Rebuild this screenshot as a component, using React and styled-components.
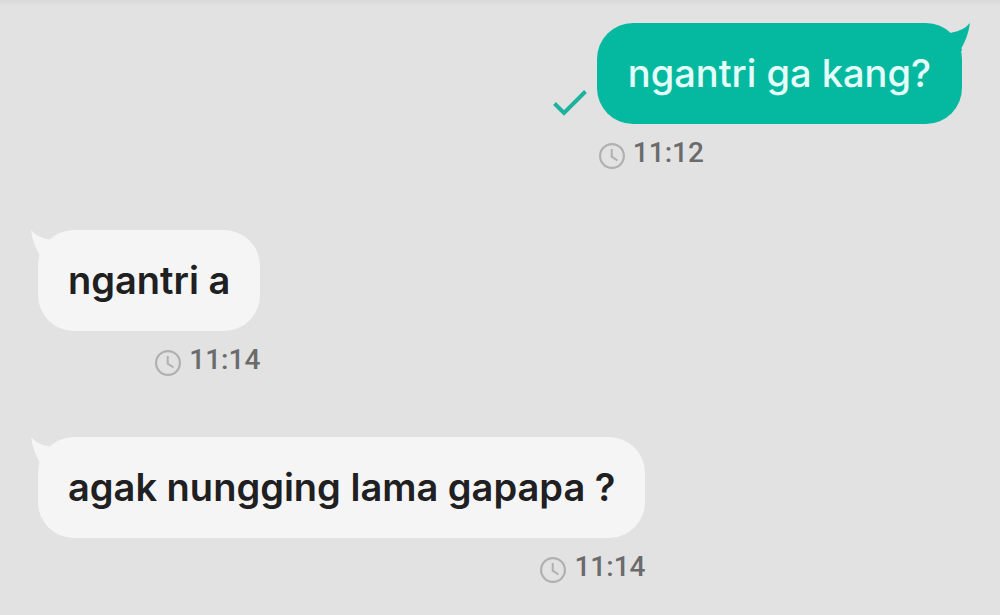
import React from 'react'
import styled, { createGlobalStyle } from 'styled-components'

const messages = [
    { id: 1, text: 'ngantri ga kang?', time: '11:12', sent: true },
    { id: 2, text: 'ngantri a', time: '11:14', sent: false },
    { id: 3, text: 'agak nungging lama gapapa ?', time: '11:14', sent: false },
]

function CheckIcon() {
    return (
        <svg width="34" height="28" viewBox="0 0 34 28" fill="none" role="img" aria-label="Delivered">
            <path d="M1.5 14.5 L11 24 L32.5 2.5" stroke="#1db39f" strokeWidth="4" />
        </svg>
    )
}

function ClockIcon() {
    return (
        <svg width="26" height="26" viewBox="0 0 26 26" fill="none" aria-hidden="true">
            <circle cx="13" cy="13" r="11.9" stroke="#b0b0b0" strokeWidth="2.2" />
            <path d="M12.7 6 V13.7 L18.5 17.5" stroke="#b0b0b0" strokeWidth="2" />
        </svg>
    )
}

function Tail({ sent }) {
    return (
        <TailStyled $sent={sent} width="28" height="28" viewBox="0 0 28 28" aria-hidden="true">
            <path d="M0 0 Q7 8 18 9.5 L28 14 L14 28 L8 28 L8.5 25 Q2 14 0 0 Z" fill="currentColor" />
        </TailStyled>
    )
}

function Message({ text, time, sent }) {
    return (
        <MessageStyled $sent={sent}>
            {sent && <CheckIcon />}
            <Stack>
                <Bubble $sent={sent}>
                    <Tail sent={sent} />
                    {text}
                </Bubble>
                <Meta $sent={sent}>
                    <ClockIcon />
                    <time>{time}</time>
                </Meta>
            </Stack>
        </MessageStyled>
    )
}

function App() {
    return (
        <>
            <GlobalStyle />
            <Chat>
                {messages.map(message => (
                    <Message key={message.id} {...message} />
                ))}
            </Chat>
        </>
    )
}

const GlobalStyle = createGlobalStyle`
    * {
        box-sizing: border-box;
    }
    body {
        margin: 0;
        background: #e2e2e2 linear-gradient(#d8d8d8, #e2e2e2) no-repeat top / 100% 6px;
        font-family: Inter, 'Liberation Sans', sans-serif;
    }
`;

const Chat = styled.ol`
    display: flex;
    flex-direction: column;
    gap: 60px;
    margin: 0;
    padding: 23px 38px 0;
    list-style: none;
`;

const MessageStyled = styled.li`
    display: flex;
    justify-content: ${({ $sent }) => ($sent ? 'flex-end' : 'flex-start')};
    gap: 10px;
    > svg {
        flex-shrink: 0;
        margin-top: 66px;
    }
`;

const Stack = styled.div`
    display: flex;
    flex-direction: column;
    gap: 12px;
`;

const Bubble = styled.p`
    position: relative;
    margin: 0;
    padding: 26px ${({ $sent }) => ($sent ? '31px' : '30px')} 27px;
    border-radius: 36px;
    background: ${({ $sent }) => ($sent ? '#04b9a0' : '#f5f5f5')};
    color: ${({ $sent }) => ($sent ? '#e4fffa' : '#202022')};
    font-size: 38px;
    font-weight: ${({ $sent }) => ($sent ? 500 : 600)};
    line-height: 48px;
`;

const TailStyled = styled.svg`
    position: absolute;
    top: 0;
    ${({ $sent }) => ($sent ? 'right: -8px;' : 'left: -7px;')}
    transform: ${({ $sent }) => ($sent ? 'scaleX(-1)' : 'none')};
    color: ${({ $sent }) => ($sent ? '#04b9a0' : '#f5f5f5')};
`;

const Meta = styled.div`
    display: flex;
    justify-content: ${({ $sent }) => ($sent ? 'flex-start' : 'flex-end')};
    align-items: flex-end;
    gap: 8px;
    padding: 0 ${({ $sent }) => ($sent ? '2px' : '0')};
    color: #6b6b6b;
    font-family: Roboto, 'Liberation Sans', sans-serif;
    font-size: 28px;
    font-weight: 500;
    line-height: 34px;
    svg {
        margin-bottom: 1px;
    }
`;

export default App
